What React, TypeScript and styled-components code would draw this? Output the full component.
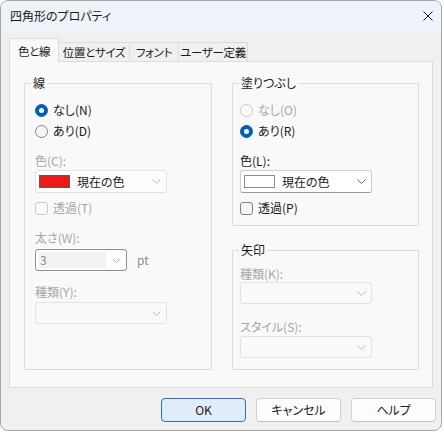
import React from "react";
import styled, { createGlobalStyle } from "styled-components";

const Global = createGlobalStyle`
  html, body { margin: 0; padding: 0; background: #ffffff; }
  body {
    font-family: "Noto Sans CJK JP", "Noto Sans", sans-serif;
    font-size: 12px;
    line-height: 16px;
    color: #1b1b1b;
    font-feature-settings: "palt";
  }
`;

const Window = styled.div`
  width: 442px;
  height: 431px;
  box-sizing: border-box;
  border: 1px solid #a7a7a7;
  border-radius: 8px;
  overflow: hidden;
  background: #f0f0f0;
  display: flex;
  flex-direction: column;
`;

const TitleBar = styled.div`
  height: 30px;
  flex: none;
  background: #eef3f9;
  display: flex;
  align-items: center;
  justify-content: space-between;
  padding: 0 8px 0 9px;
`;

const Title = styled.span`
  font-size: 12px;
  color: #1a1a1a;
`;

const CloseIcon = styled.svg`
  width: 10px;
  height: 10px;
  display: block;
`;

const Body = styled.div`
  padding: 7px 8px 0 8px;
  display: flex;
  flex-direction: column;
`;

const TabStrip = styled.div`
  height: 23px;
  display: flex;
  align-items: flex-end;
  position: relative;
  z-index: 1;
`;

const Tab = styled.div<{ $w: number; $active?: boolean }>`
  width: ${(p) => p.$w}px;
  height: ${(p) => (p.$active ? 24 : 19)}px;
  margin-bottom: ${(p) => (p.$active ? -1 : 0)}px;
  margin-left: -1px;
  box-sizing: border-box;
  border: 1px solid #dcdcdc;
  border-bottom: none;
  background: ${(p) => (p.$active ? "#f9f9f9" : "#f0f0f0")};
  display: flex;
  align-items: center;
  justify-content: center;
  padding-top: ${(p) => (p.$active ? 1 : 0)}px;
  font-size: 11.5px;
  letter-spacing: -0.3px;
  white-space: nowrap;
  color: #1a1a1a;
  &:first-child { margin-left: 0; }
`;

const Panel = styled.div`
  width: 424px;
  height: 327px;
  box-sizing: border-box;
  border: 1px solid #dcdcdc;
  background: #f9f9f9;
  padding: 21px 13px 0 14px;
  display: flex;
  gap: 20px;
`;

const Column = styled.div`
  display: flex;
  flex-direction: column;
  gap: 24px;
`;

const Group = styled.div<{ $w: number; $h: number; $pl: number; $pt: number }>`
  position: relative;
  box-sizing: border-box;
  width: ${(p) => p.$w}px;
  height: ${(p) => p.$h}px;
  border: 1px solid #dcdcdc;
  padding: ${(p) => p.$pt}px 0 0 ${(p) => p.$pl}px;
  display: flex;
  flex-direction: column;
  align-items: flex-start;
`;

const Legend = styled.span`
  position: absolute;
  top: -9px;
  left: 6px;
  padding: 0 2px;
  background: #f9f9f9;
  line-height: 16px;
  color: #1a1a1a;
`;

const Option = styled.div<{ $mt?: number; $disabled?: boolean }>`
  display: flex;
  align-items: center;
  gap: 5px;
  height: 18px;
  margin-top: ${(p) => p.$mt ?? 0}px;
  color: ${(p) => (p.$disabled ? "#a6a6a6" : "#1a1a1a")};
`;

const RadioDot = styled.span<{ $checked?: boolean; $disabled?: boolean }>`
  width: 13px;
  height: 13px;
  box-sizing: border-box;
  border-radius: 50%;
  flex: none;
  display: flex;
  align-items: center;
  justify-content: center;
  background: ${(p) => (p.$checked ? "#005fb8" : p.$disabled ? "#fafafa" : "#f5f5f5")};
  border: 1px solid
    ${(p) => (p.$checked ? "#005fb8" : p.$disabled ? "#c9c9c9" : "#858585")};
  &::after {
    content: "";
    display: ${(p) => (p.$checked ? "block" : "none")};
    width: 5px;
    height: 5px;
    border-radius: 50%;
    background: #ffffff;
  }
`;

const CheckBox = styled.span<{ $disabled?: boolean }>`
  width: 13px;
  height: 13px;
  box-sizing: border-box;
  border-radius: 3px;
  flex: none;
  background: ${(p) => (p.$disabled ? "#fafafa" : "#f5f5f5")};
  border: 1px solid ${(p) => (p.$disabled ? "#cbcbcb" : "#7f7f7f")};
`;

const FieldLabel = styled.div<{ $mt?: number; $disabled?: boolean }>`
  height: 16px;
  line-height: 16px;
  margin-top: ${(p) => p.$mt ?? 0}px;
  color: ${(p) => (p.$disabled ? "#a6a6a6" : "#1a1a1a")};
`;

type ComboKind = "enabled" | "muted" | "disabled" | "edit";

const Combo = styled.div<{ $w: number; $h: number; $mt?: number; $kind: ComboKind }>`
  width: ${(p) => p.$w}px;
  height: ${(p) => p.$h}px;
  margin-top: ${(p) => p.$mt ?? 0}px;
  box-sizing: border-box;
  border-radius: 3px;
  display: flex;
  align-items: center;
  padding: 0 5px 0 3px;
  border: 1px solid
    ${(p) =>
      p.$kind === "enabled"
        ? "#cdcdcd"
        : p.$kind === "edit"
        ? "#8f8f8f"
        : "#e2e2e2"};
  ${(p) => (p.$kind === "enabled" ? "border-bottom-color: #9a9a9a;" : "")}
  background: ${(p) =>
    p.$kind === "enabled" ? "#ffffff" : p.$kind === "disabled" ? "#f9f9f9" : "#fdfdfd"};
`;

const ComboText = styled.span<{ $disabled?: boolean }>`
  flex: 1;
  color: ${(p) => (p.$disabled ? "#8a8a8a" : "#1a1a1a")};
  white-space: nowrap;
`;

const EditField = styled.span`
  flex: 1;
  align-self: stretch;
  margin: 2px 6px 2px 0;
  background: #f3f3f3;
  display: flex;
  align-items: center;
  padding-left: 1px;
  color: #8a8a8a;
`;

const Swatch = styled.span<{ $color: string; $edge: string }>`
  width: 31px;
  height: 13px;
  box-sizing: border-box;
  flex: none;
  background: ${(p) => p.$color};
  border: 1px solid ${(p) => p.$edge};
  margin-right: 7px;
`;

const Chevron = styled.svg`
  width: 9px;
  height: 5px;
  flex: none;
  display: block;
`;

const InlineRow = styled.div<{ $mt?: number }>`
  display: flex;
  align-items: center;
  gap: 10px;
  margin-top: ${(p) => p.$mt ?? 0}px;
`;

const Unit = styled.span`
  color: #8f8f8f;
`;

const Footer = styled.div`
  display: flex;
  justify-content: flex-end;
  gap: 10px;
  padding: 10px 5px 0 0;
`;

const Button = styled.button<{ $default?: boolean }>`
  width: 85px;
  height: 24px;
  box-sizing: border-box;
  border-radius: 4px;
  font: inherit;
  font-size: 12px;
  color: #1a1a1a;
  padding: 0;
  background: ${(p) => (p.$default ? "#e0ecf8" : "#fdfdfd")};
  border: 1px solid ${(p) => (p.$default ? "#2a72c2" : "#d2d2d2")};
  ${(p) => (p.$default ? "" : "border-bottom-color: #c2c2c2;")}
`;

function Down({ light }: { light?: boolean }) {
  return (
    <Chevron viewBox="0 0 9 5">
      <path
        d="M0.5 0.5 L4.5 4.5 L8.5 0.5"
        fill="none"
        stroke={light ? "#b8b8b8" : "#6b6b6b"}
        strokeWidth="1"
      />
    </Chevron>
  );
}

function Radio({
  label,
  checked,
  disabled,
  mt,
}: {
  label: string;
  checked?: boolean;
  disabled?: boolean;
  mt?: number;
}) {
  return (
    <Option $mt={mt} $disabled={disabled}>
      <RadioDot $checked={checked} $disabled={disabled} />
      {label}
    </Option>
  );
}

function Check({ label, disabled, mt }: { label: string; disabled?: boolean; mt?: number }) {
  return (
    <Option $mt={mt} $disabled={disabled}>
      <CheckBox $disabled={disabled} />
      {label}
    </Option>
  );
}

export default function App() {
  return (
    <>
      <Global />
      <Window>
        <TitleBar>
          <Title>四角形のプロパティ</Title>
          <CloseIcon viewBox="0 0 10 10">
            <path d="M0.5 0.5 L9.5 9.5 M9.5 0.5 L0.5 9.5" stroke="#1a1a1a" strokeWidth="1" />
          </CloseIcon>
        </TitleBar>
        <Body>
          <TabStrip>
            <Tab $w={50} $active>
              色と線
            </Tab>
            <Tab $w={72}>位置とサイズ</Tab>
            <Tab $w={50}>フォント</Tab>
            <Tab $w={70}>ユーザー定義</Tab>
          </TabStrip>
          <Panel>
            <Group $w={188} $h={287} $pl={10} $pt={17}>
              <Legend>線</Legend>
              <Radio label="なし(N)" checked />
              <Radio label="あり(D)" mt={3} />
              <FieldLabel $mt={13} $disabled>
                色(C):
              </FieldLabel>
              <Combo $w={132} $h={23} $mt={1} $kind="muted">
                <Swatch $color="#ee1a1a" $edge="#5a5a5a" />
                <ComboText>現在の色</ComboText>
                <Down light />
              </Combo>
              <Check label="透過(T)" disabled mt={6} />
              <FieldLabel $mt={13} $disabled>
                太さ(W):
              </FieldLabel>
              <InlineRow $mt={3}>
                <Combo $w={92} $h={22} $kind="edit">
                  <EditField>3</EditField>
                  <Down light />
                </Combo>
                <Unit>pt</Unit>
              </InlineRow>
              <FieldLabel $mt={13} $disabled>
                種類(Y):
              </FieldLabel>
              <Combo $w={132} $h={22} $mt={2} $kind="disabled">
                <ComboText />
                <Down light />
              </Combo>
            </Group>
            <Column>
              <Group $w={187} $h={143} $pl={7} $pt={17}>
                <Legend>塗りつぶし</Legend>
                <Radio label="なし(O)" disabled />
                <Radio label="あり(R)" checked mt={3} />
                <FieldLabel $mt={13}>色(L):</FieldLabel>
                <Combo $w={132} $h={23} $mt={1} $kind="enabled">
                  <Swatch $color="#ffffff" $edge="#8c8c8c" />
                  <ComboText>現在の色</ComboText>
                  <Down />
                </Combo>
                <Check label="透過(P)" mt={6} />
              </Group>
              <Group $w={187} $h={120} $pl={7} $pt={15}>
                <Legend>矢印</Legend>
                <FieldLabel $disabled>種類(K):</FieldLabel>
                <Combo $w={132} $h={22} $kind="disabled">
                  <ComboText />
                  <Down light />
                </Combo>
                <FieldLabel $mt={15} $disabled>
                  スタイル(S):
                </FieldLabel>
                <Combo $w={132} $h={22} $mt={1} $kind="disabled">
                  <ComboText />
                  <Down light />
                </Combo>
              </Group>
            </Column>
          </Panel>
        </Body>
        <Footer>
          <Button $default>OK</Button>
          <Button>キャンセル</Button>
          <Button>ヘルプ</Button>
        </Footer>
      </Window>
    </>
  );
}
